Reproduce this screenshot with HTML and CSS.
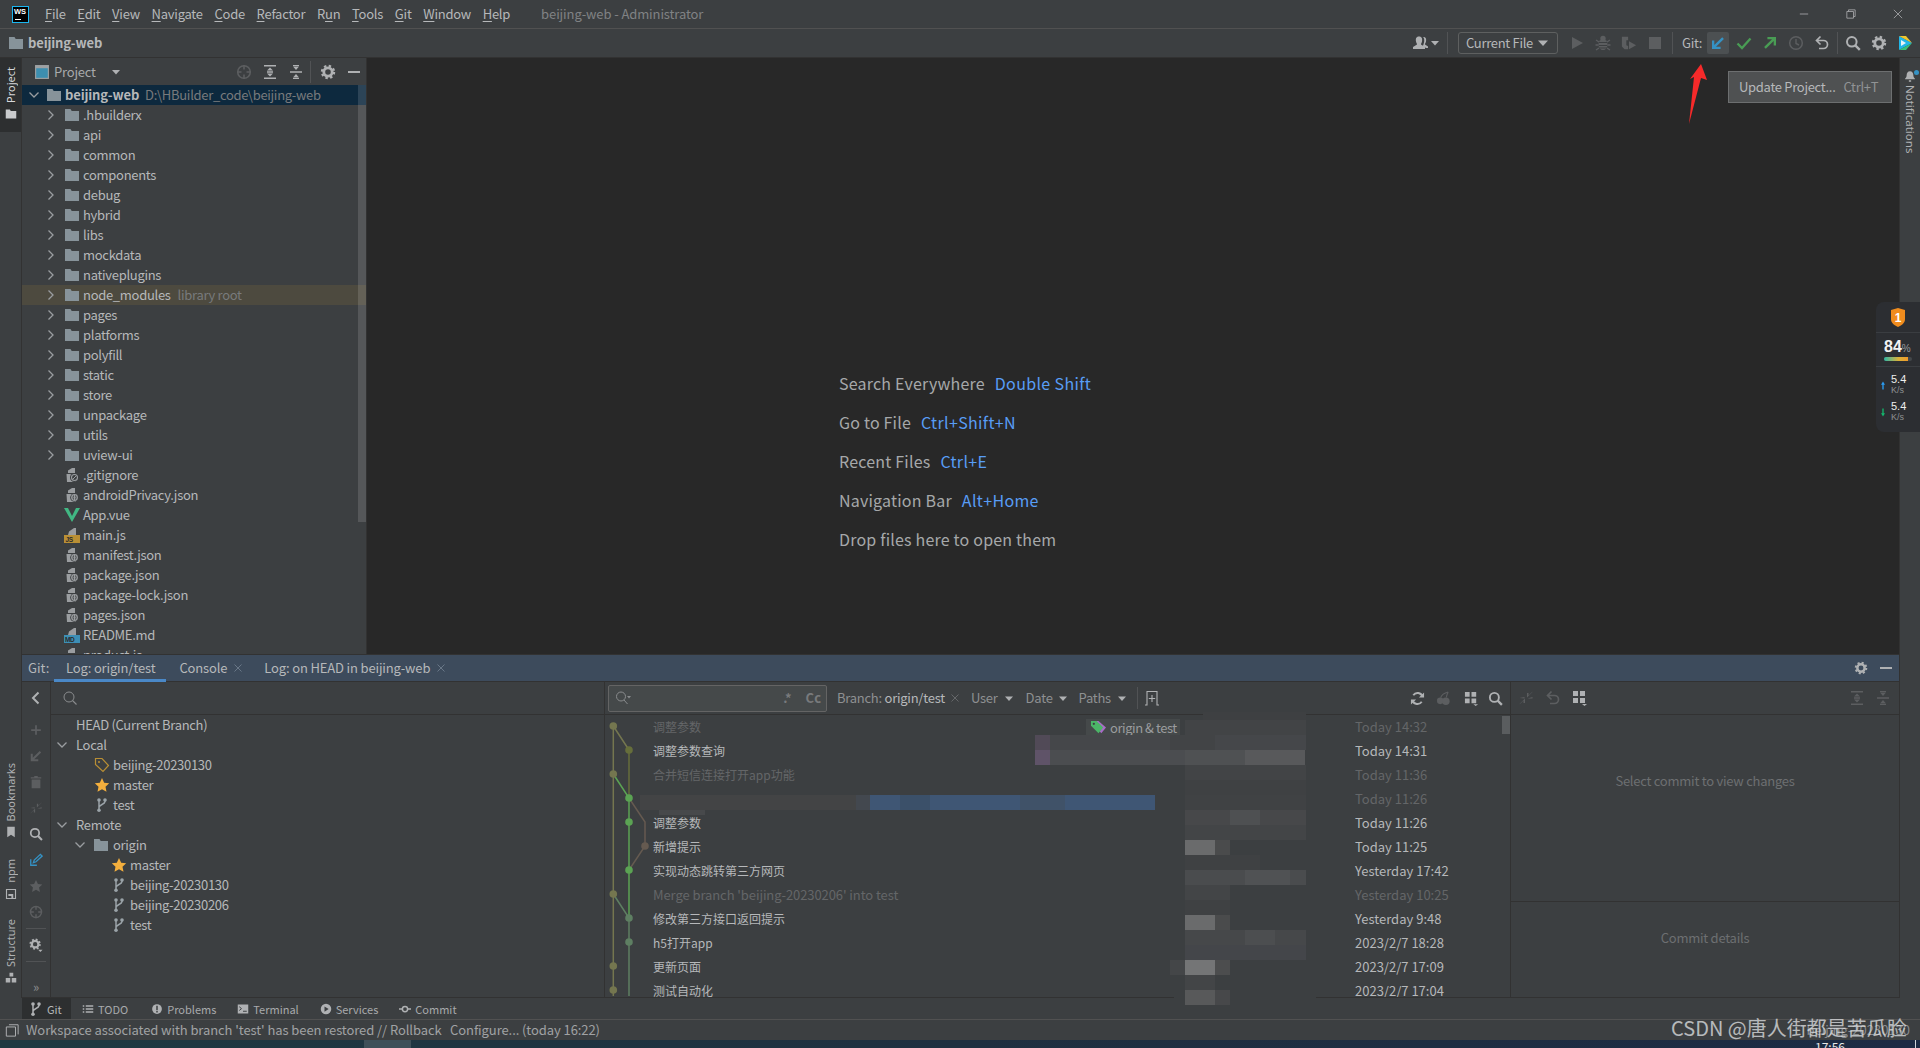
FILE: index.html
```html
<!DOCTYPE html>
<html lang="en">
<head>
<meta charset="utf-8">
<title>beijing-web - Administrator</title>
<link rel="stylesheet" href="styles.css">
</head>
<body>
<svg class="defs" aria-hidden="true">
  <symbol id="folder" viewBox="0 0 16 16"><path fill="currentColor" d="M1 2h5.500l1.200 2H15v10H1z"/></symbol>
  <symbol id="chev-r" viewBox="0 0 16 16"><path fill="none" stroke="currentColor" stroke-width="1.300" d="M5.500 3.500 10 8l-4.500 4.500"/></symbol>
  <symbol id="chev-d" viewBox="0 0 16 16"><path fill="none" stroke="currentColor" stroke-width="1.300" d="M3.500 5.500 8 10l4.500-4.500"/></symbol>
  <symbol id="chev-l" viewBox="0 0 16 16"><path fill="none" stroke="currentColor" stroke-width="2" d="M10.500 2.500 5 8l5.500 5.500"/></symbol>
  <symbol id="tri" viewBox="0 0 10 6"><path fill="currentColor" d="M0 .5h10L5 6z"/></symbol>
  <symbol id="xmark" viewBox="0 0 8 8"><path stroke="currentColor" stroke-width=".9" d="m.5.500 7 7M7.500.500l-7 7"/></symbol>
  <symbol id="doc" viewBox="0 0 16 16"><path fill="#9a9da0" d="M4 3.500 8 1h3v5H4zM2.500 7H12v8H3z"/><circle cx="10.500" cy="10.500" r="4.300" fill="#3c3f41"/><circle cx="10.500" cy="10.500" r="3.400" fill="#9a9da0"/><path fill="none" stroke="#3c3f41" d="M9.800 8.500c-1 0 0 2-1 2 1 0 0 2 1 2M11.300 8.500c1 0 0 2 1 2-1 0 0 2-1 2"/></symbol>
  <symbol id="ignore" viewBox="0 0 16 16"><path fill="#9a9da0" d="M4 3.500 8 1h3v5H4zM2.500 7H12v8H3z"/><circle cx="10.500" cy="10.500" r="4.500" fill="#3c3f41"/><circle cx="10.500" cy="10.500" r="3" fill="none" stroke="#9a9da0" stroke-width="1.100"/><path stroke="#9a9da0" d="m8.500 12.500 4-4"/></symbol>
  <symbol id="vue" viewBox="0 0 16 16"><path fill="#41b883" d="M0 1h4l4 8 4-8h4L8 15z"/></symbol>
  <symbol id="jsf" viewBox="0 0 16 16"><path fill="#9a9da0" d="M5 4.500 10 1h2v7H4z"/><rect y="8" width="16" height="8" fill="#b98f35"/><text x="1.500" y="14.500" class="tag-js">JS</text></symbol>
  <symbol id="mdf" viewBox="0 0 16 16"><path fill="#9a9da0" d="M5 4.500 10 1h2v7H4z"/><rect y="8" width="16" height="8" fill="#3d8fb5"/><text x="1" y="14.500" class="tag-js">MD</text></symbol>
  <symbol id="gear" viewBox="0 0 16 16"><circle cx="8" cy="8" r="4.200" fill="none" stroke="currentColor" stroke-width="2.800"/><circle cx="8" cy="8" r="6" fill="none" stroke="currentColor" stroke-width="2.400" stroke-dasharray="2.350 2.360"/></symbol>
  <symbol id="minus" viewBox="0 0 16 16"><rect x="2" y="7" width="12" height="2" fill="currentColor"/></symbol>
  <symbol id="locate" viewBox="0 0 16 16"><circle cx="8" cy="8" r="6.300" fill="none" stroke="currentColor" stroke-width="1.600"/><path stroke="currentColor" stroke-width="1.600" d="M8 1v4.500M8 10.500V15M1 8h4.500M10.500 8H15"/></symbol>
  <symbol id="expand" viewBox="0 0 16 16"><path fill="currentColor" d="M2 1h12v1.500H2zM2 13.500h12V15H2zM8 3.500l3 3H5zM8 12.500l-3-3h6zM5 7.300h6v1.400H5z"/></symbol>
  <symbol id="collapse" viewBox="0 0 16 16"><path fill="currentColor" d="M2 7.200h12v1.600H2zM8 6 5 2.500h6zM8 10l3 3.500H5zM5 1h6v1H5zM5 14h6v1H5z"/></symbol>
  <symbol id="user" viewBox="0 0 26 16"><path fill="currentColor" d="M6 1.500c3 0 3.500 2.500 3 5-.3 1.500-1 2-1 3l4 2.500v2H0v-2l4-2.500c0-1-.7-1.500-1-3-.5-2.500 0-5 3-5zM10 2c3 0 3.500 2 3 4.500-.3 1.300-1 2-1 3l3 2v1.500h-2l-3-2c.5-2 1-3 1.200-4.500.2-2 0-3.500-1.200-4.500z"/><path fill="currentColor" d="M18 6h8l-4 4.500z"/></symbol>
  <symbol id="play" viewBox="0 0 16 16"><path fill="currentColor" d="M3 2v12l11-6z"/></symbol>
  <symbol id="bug" viewBox="0 0 16 16"><ellipse cx="8" cy="9.500" rx="4.500" ry="5.500" fill="currentColor"/><circle cx="8" cy="3.500" r="2.700" fill="currentColor"/><path stroke="currentColor" stroke-width="1.300" d="M1 5l3 2M15 5l-3 2M.5 10h3M15.500 10h-3M1 15l3-2M15 15l-3-2"/><path stroke="#3c3f41" d="M4 7.500h8M4 10.500h8M4 13h8"/></symbol>
  <symbol id="cov" viewBox="0 0 18 16"><path fill="currentColor" d="M1 1h7v4H6v5.500l2 1V15H4l-3-3z"/><path fill="currentColor" d="M9 6v9l8-4.500z"/></symbol>
  <symbol id="stop" viewBox="0 0 16 16"><rect x="2" y="2" width="12" height="12" fill="currentColor"/></symbol>
  <symbol id="upd" viewBox="0 0 16 16"><path fill="currentColor" d="M2 14V5.500h2.300v4.600L12.200 2.200l1.700 1.700L6 11.800h4.600V14z"/></symbol>
  <symbol id="chk" viewBox="0 0 16 16"><path fill="none" stroke="currentColor" stroke-width="2.300" d="m1.500 8.500 4.500 4.500 8.500-9.500"/></symbol>
  <symbol id="push" viewBox="0 0 16 16"><path fill="currentColor" d="M14 2v8.500h-2.300V5.900L3.800 13.800 2.100 12.100 10 4.200H5.400V2z"/></symbol>
  <symbol id="clock" viewBox="0 0 16 16"><circle cx="8" cy="8" r="6.300" fill="none" stroke="currentColor" stroke-width="1.500"/><path fill="none" stroke="currentColor" stroke-width="1.400" d="M8 4v4.500l3 1.500"/></symbol>
  <symbol id="undo" viewBox="0 0 16 16"><path fill="none" stroke="currentColor" stroke-width="1.700" d="M3 5.500h6.500a4 4 0 0 1 0 8H5M6.500 1.500 2.500 5.500l4 4"/></symbol>
  <symbol id="search" viewBox="0 0 16 16"><circle cx="6.800" cy="6.800" r="4.800" fill="none" stroke="currentColor" stroke-width="2"/><path stroke="currentColor" stroke-width="2.400" d="m10.300 10.300 4.500 4.500"/></symbol>
  <symbol id="search-thin" viewBox="0 0 16 16"><circle cx="7" cy="7" r="5" fill="none" stroke="currentColor"/><path stroke="currentColor" stroke-width="1.100" d="m10.500 10.500 4 4"/></symbol>
  <symbol id="searchq" viewBox="0 0 16 16"><circle cx="6" cy="6.500" r="4.500" fill="none" stroke="currentColor"/><path stroke="currentColor" d="m9 10 3.500 4"/><path fill="currentColor" d="M12 6h4l-2 2.500z"/></symbol>
  <symbol id="logo" viewBox="0 0 16 16"><path fill="#21b6e8" d="M2 1 15 8 2 15z"/><path fill="#f0c62c" d="M2 1 9 1 15 8z"/><path fill="#35c07a" d="M2 15 9 15 15 8z"/><path fill="#e8f4f8" d="M4 5l5 3-5 3z"/></symbol>
  <symbol id="plus" viewBox="0 0 16 16"><path fill="currentColor" d="M7 2.500h2V7h4.500v2H9v4.500H7V9H2.500V7H7z"/></symbol>
  <symbol id="trash" viewBox="0 0 16 16"><path fill="currentColor" d="M3 5h10v10H3zM2 2.500h4V1h4v1.500h4V4H2z"/></symbol>
  <symbol id="fetch" viewBox="0 0 16 16"><path fill="currentColor" d="M15 1.500 9 7.500V3h1.500v2.500l3-3zM1 14.500l6-6V13H5.500v-2.500l-3 3zM9.500 8.500l5-1.500V8.500zM1.500 8l5-1v1.500z"/></symbol>
  <symbol id="pencil" viewBox="0 0 16 16"><path fill="none" stroke="currentColor" stroke-width="1.500" d="M2 7v7h7M5 11l1-3 7-6.500 2 2L8 10z"/></symbol>
  <symbol id="star" viewBox="0 0 16 16"><path fill="currentColor" d="m8 1 2.200 4.700 5 .6-3.700 3.500 1 5L8 12.300l-4.500 2.500 1-5L.8 6.300l5-.6z"/></symbol>
  <symbol id="gear-d" viewBox="0 0 16 16"><circle cx="7" cy="7" r="3.800" fill="none" stroke="currentColor" stroke-width="2.600"/><circle cx="7" cy="7" r="5.400" fill="none" stroke="currentColor" stroke-width="2.200" stroke-dasharray="2.100 2.140"/><path fill="currentColor" d="M10.500 13.500h5l-2.500 2.500z"/></symbol>
  <symbol id="tagi" viewBox="0 0 16 16"><path fill="none" stroke="#b98f35" stroke-width="1.200" d="M1.500 1.500h6.500l6.500 7-5.500 6-7.500-7z"/><circle cx="5" cy="5" r="1" fill="#b98f35"/></symbol>
  <symbol id="branch" viewBox="0 0 16 16"><path fill="none" stroke="currentColor" stroke-width="1.500" d="M5 3v10M11 3v1.500c0 3-6 3-6 6"/><circle cx="5" cy="3" r="1.800" fill="currentColor"/><circle cx="5" cy="13.200" r="1.800" fill="currentColor"/><circle cx="11" cy="3" r="1.800" fill="currentColor"/></symbol>
  <symbol id="refresh" viewBox="0 0 16 16"><path fill="none" stroke="currentColor" stroke-width="2" d="M13.300 6A5.500 5.500 0 0 0 3.500 4.500M2.700 10a5.500 5.500 0 0 0 9.800 1.500"/><path fill="currentColor" d="M15 1.500V7H9.500zM1 14.500V9h5.500z"/></symbol>
  <symbol id="cherry" viewBox="0 0 16 16"><circle cx="4.500" cy="10.500" r="3.500" fill="currentColor"/><circle cx="10.500" cy="11" r="4" fill="currentColor"/><path fill="none" stroke="currentColor" stroke-width="1.200" d="M13 1C9 2 6 4 5 7M13 1c-1 2-2 4-2 6"/></symbol>
  <symbol id="group" viewBox="0 0 16 16"><path fill="currentColor" d="M1 1h5v5H1zM8 1h5v5H8zM1 8h5v5H1zM8 8h5v5H8zM10 14h5l-2.500 2z"/></symbol>
  <symbol id="newtab" viewBox="0 0 16 16"><path fill="none" stroke="currentColor" stroke-width="1.100" d="M1 15h2V1.500h10V15h2M8 5v7M4.800 8.500h6.400"/></symbol>
  <symbol id="list" viewBox="0 0 16 16"><path fill="currentColor" d="M1 3h2v2H1zM5 3h10v2H5zM1 7h2v2H1zM5 7h10v2H5zM1 11h2v2H1zM5 11h10v2H5z"/></symbol>
  <symbol id="prob" viewBox="0 0 16 16"><circle cx="8" cy="8" r="6.500" fill="currentColor"/><path stroke="#3c3f41" stroke-width="2" d="M8 3.500v6M8 10.500v2"/></symbol>
  <symbol id="term" viewBox="0 0 16 16"><path fill="currentColor" d="M1 2h14v12H1z"/><path fill="none" stroke="#3c3f41" stroke-width="1.300" d="m3 5 3 2.500L3 10M8 11h5"/></symbol>
  <symbol id="serv" viewBox="0 0 16 16"><circle cx="8" cy="8" r="7" fill="currentColor"/><path fill="#3c3f41" d="M6 4.500v7l5.500-3.500z"/></symbol>
  <symbol id="commit" viewBox="0 0 16 16"><circle cx="8" cy="8" r="3.500" fill="none" stroke="currentColor" stroke-width="2"/><path stroke="currentColor" stroke-width="2" d="M0 8h4M12 8h4"/></symbol>
  <symbol id="square" viewBox="0 0 16 16"><path fill="none" stroke="currentColor" stroke-width="1.100" d="M4.500 2H15v11M1.500 4.500h10.500v10.500H1.500z"/></symbol>
  <symbol id="bell" viewBox="0 0 16 16"><path fill="currentColor" d="M8 1c3 0 4.500 2.500 4.500 5.500 0 2 1 3 2 4v1H1.500v-1c1-1 2-2 2-4C3.500 3.500 5 1 8 1zM6.500 13h3v2h-3z"/></symbol>
  <symbol id="bookmark" viewBox="0 0 16 16"><path fill="currentColor" d="M3 1h10v14l-5-3.500L3 15z"/></symbol>
  <symbol id="npmi" viewBox="0 0 16 16"><path fill="none" stroke="currentColor" stroke-width="1.500" d="M2 2h12v12H2z"/><path fill="currentColor" d="M4.500 8H11v6H8.500V10.500h-4z"/></symbol>
  <symbol id="struct" viewBox="0 0 16 16"><path fill="currentColor" d="M6 1h5v5H6zM1 8h6v6H1zM9 8h6v6H9z"/></symbol>
  <symbol id="projtool" viewBox="0 0 16 16"><rect x=".7" y=".7" width="14.600" height="14.600" fill="#3d8fb0" stroke="#9ea1a3" stroke-width="1.300"/><rect x=".7" y=".7" width="14.600" height="3" fill="#9ea1a3"/></symbol>
  <symbol id="greentag" viewBox="0 0 18 16"><path fill="#a96cc7" d="M6 1h3l8 7-5 6-6-7z"/><path fill="#4bb567" d="M1 1h6l7 7-5 6-8-8z"/><circle cx="4" cy="4" r="1.200" fill="#3c3f41"/></symbol>
</svg>

<header class="titlebar">
  <div class="ws-logo"><span class="ws-text">WS</span><span class="ws-line"></span></div>
  <nav class="menu">
    <span><u>F</u>ile</span><span><u>E</u>dit</span><span><u>V</u>iew</span><span><u>N</u>avigate</span><span><u>C</u>ode</span><span><u>R</u>efactor</span><span>R<u>u</u>n</span><span><u>T</u>ools</span><span><u>G</u>it</span><span><u>W</u>indow</span><span><u>H</u>elp</span>
  </nav>
  <div class="wintitle">beijing-web - Administrator</div>
  <div class="winctl">
    <svg class="wc" viewBox="0 0 12 12"><path stroke="#a8aaac" d="M1 6h10"/></svg>
    <svg class="wc" viewBox="0 0 12 12"><path fill="none" stroke="#a8aaac" d="M3 3V1h8v8H9M1 3h8v8H1z"/></svg>
    <svg class="wc" viewBox="0 0 12 12"><path stroke="#a8aaac" d="m1 1 10 10M11 1 1 11"/></svg>
  </div>
</header>

<div class="navbar">
  <svg class="i nav-folder"><use href="#folder"/></svg>
  <span class="crumb">beijing-web</span>
  <div class="spacer"></div>
  <svg class="i-user"><use href="#user"/></svg>
  <span class="vsep sep-a"></span>
  <div class="runcfg"><span>Current File</span><svg class="tri"><use href="#tri"/></svg></div>
  <div class="tb first"><svg class="i dim"><use href="#play"/></svg></div>
  <div class="tb"><svg class="i dim"><use href="#bug"/></svg></div>
  <div class="tb"><svg class="i dim"><use href="#cov"/></svg></div>
  <div class="tb"><svg class="i dim"><use href="#stop"/></svg></div>
  <span class="vsep sep-b"></span>
  <span class="gitlbl">Git:</span>
  <div class="tb"><span class="hover"><svg class="i blue"><use href="#upd"/></svg></span></div>
  <div class="tb"><svg class="i green"><use href="#chk"/></svg></div>
  <div class="tb"><svg class="i green"><use href="#push"/></svg></div>
  <div class="tb"><svg class="i dim"><use href="#clock"/></svg></div>
  <div class="tb"><svg class="i"><use href="#undo"/></svg></div>
  <span class="vsep sep-c"></span>
  <div class="tb"><svg class="i"><use href="#search"/></svg></div>
  <div class="tb"><svg class="i"><use href="#gear"/></svg></div>
  <div class="tb tb-last"><svg class="i"><use href="#logo"/></svg></div>
</div>

<main class="workspace">
  <aside class="left-strip">
    <div class="strip-project"><span class="vtext active">Project</span><svg class="i strip-ic light"><use href="#folder"/></svg></div>
    <div class="spacer"></div>
    <span class="vtext">Bookmarks</span><svg class="i strip-ic s-bm"><use href="#bookmark"/></svg>
    <span class="vtext s-npm">npm</span><svg class="i strip-ic s-npmi"><use href="#npmi"/></svg>
    <span class="vtext s-st">Structure</span><svg class="i strip-ic s-sti"><use href="#struct"/></svg>
  </aside>

  <div class="center">
    <div class="top">
      <section class="project">
        <div class="pj-head">
          <svg class="i pj-ic"><use href="#projtool"/></svg>
          <span class="pj-title">Project</span>
          <svg class="tri pj-tri"><use href="#tri"/></svg>
          <div class="spacer"></div>
          <svg class="i dim"><use href="#locate"/></svg>
          <svg class="i pj-a"><use href="#expand"/></svg>
          <svg class="i pj-a"><use href="#collapse"/></svg>
          <span class="vsep pj-sep"></span>
          <svg class="i pj-g"><use href="#gear"/></svg>
          <svg class="i pj-m"><use href="#minus"/></svg>
        </div>
        <div class="tree">
          <div class="row root"><svg class="i tw"><use href="#chev-d"/></svg><svg class="i fic r"><use href="#folder"/></svg><b>beijing-web</b><span class="path">D:\HBuilder_code\beijing-web</span></div>
          <div class="row dir"><svg class="i tw"><use href="#chev-r"/></svg><svg class="i fic"><use href="#folder"/></svg>.hbuilderx</div>
          <div class="row dir"><svg class="i tw"><use href="#chev-r"/></svg><svg class="i fic"><use href="#folder"/></svg>api</div>
          <div class="row dir"><svg class="i tw"><use href="#chev-r"/></svg><svg class="i fic"><use href="#folder"/></svg>common</div>
          <div class="row dir"><svg class="i tw"><use href="#chev-r"/></svg><svg class="i fic"><use href="#folder"/></svg>components</div>
          <div class="row dir"><svg class="i tw"><use href="#chev-r"/></svg><svg class="i fic"><use href="#folder"/></svg>debug</div>
          <div class="row dir"><svg class="i tw"><use href="#chev-r"/></svg><svg class="i fic"><use href="#folder"/></svg>hybrid</div>
          <div class="row dir"><svg class="i tw"><use href="#chev-r"/></svg><svg class="i fic"><use href="#folder"/></svg>libs</div>
          <div class="row dir"><svg class="i tw"><use href="#chev-r"/></svg><svg class="i fic"><use href="#folder"/></svg>mockdata</div>
          <div class="row dir"><svg class="i tw"><use href="#chev-r"/></svg><svg class="i fic"><use href="#folder"/></svg>nativeplugins</div>
          <div class="row dir lib"><svg class="i tw"><use href="#chev-r"/></svg><svg class="i fic"><use href="#folder"/></svg>node_modules<span class="libroot">library root</span></div>
          <div class="row dir"><svg class="i tw"><use href="#chev-r"/></svg><svg class="i fic"><use href="#folder"/></svg>pages</div>
          <div class="row dir"><svg class="i tw"><use href="#chev-r"/></svg><svg class="i fic"><use href="#folder"/></svg>platforms</div>
          <div class="row dir"><svg class="i tw"><use href="#chev-r"/></svg><svg class="i fic"><use href="#folder"/></svg>polyfill</div>
          <div class="row dir"><svg class="i tw"><use href="#chev-r"/></svg><svg class="i fic"><use href="#folder"/></svg>static</div>
          <div class="row dir"><svg class="i tw"><use href="#chev-r"/></svg><svg class="i fic"><use href="#folder"/></svg>store</div>
          <div class="row dir"><svg class="i tw"><use href="#chev-r"/></svg><svg class="i fic"><use href="#folder"/></svg>unpackage</div>
          <div class="row dir"><svg class="i tw"><use href="#chev-r"/></svg><svg class="i fic"><use href="#folder"/></svg>utils</div>
          <div class="row dir"><svg class="i tw"><use href="#chev-r"/></svg><svg class="i fic"><use href="#folder"/></svg>uview-ui</div>
          <div class="row file"><svg class="i fic"><use href="#ignore"/></svg>.gitignore</div>
          <div class="row file"><svg class="i fic"><use href="#doc"/></svg>androidPrivacy.json</div>
          <div class="row file"><svg class="i fic"><use href="#vue"/></svg>App.vue</div>
          <div class="row file"><svg class="i fic"><use href="#jsf"/></svg>main.js</div>
          <div class="row file"><svg class="i fic"><use href="#doc"/></svg>manifest.json</div>
          <div class="row file"><svg class="i fic"><use href="#doc"/></svg>package.json</div>
          <div class="row file"><svg class="i fic"><use href="#doc"/></svg>package-lock.json</div>
          <div class="row file"><svg class="i fic"><use href="#doc"/></svg>pages.json</div>
          <div class="row file"><svg class="i fic"><use href="#mdf"/></svg>README.md</div>
          <div class="row file"><svg class="i fic"><use href="#doc"/></svg>product.js</div>
          <div class="pj-scroll"></div>
        </div>
      </section>
      <section class="editor">
        <p class="hint">Search Everywhere<span>Double Shift</span></p>
        <p class="hint">Go to File<span>Ctrl+Shift+N</span></p>
        <p class="hint">Recent Files<span>Ctrl+E</span></p>
        <p class="hint">Navigation Bar<span>Alt+Home</span></p>
        <p class="hint">Drop files here to open them</p>
      </section>
    </div>

    <section class="bottom">
      <div class="tabs">
        <span class="tab-lbl">Git:</span>
        <span class="tab on">Log: origin/test</span>
        <span class="tab t-con">Console</span><svg class="tab-x"><use href="#xmark"/></svg>
        <span class="tab t-head">Log: on HEAD in beijing-web</span><svg class="tab-x"><use href="#xmark"/></svg>
        <div class="spacer"></div>
        <svg class="i tab-g"><use href="#gear"/></svg>
        <svg class="i tab-m"><use href="#minus"/></svg>
      </div>
      <div class="git-body">
        <div class="vtools">
          <div class="vt-top"><svg class="i"><use href="#chev-l"/></svg></div>
          <div class="vt"><svg class="i dim"><use href="#plus"/></svg></div>
          <div class="vt"><svg class="i dim"><use href="#upd"/></svg></div>
          <div class="vt"><svg class="i dim"><use href="#trash"/></svg></div>
          <div class="vt"><svg class="i dim"><use href="#fetch"/></svg></div>
          <div class="vt"><svg class="i"><use href="#search"/></svg></div>
          <div class="vt"><svg class="i blue"><use href="#pencil"/></svg></div>
          <div class="vt"><svg class="i dim"><use href="#star"/></svg></div>
          <div class="vt"><svg class="i dim"><use href="#locate"/></svg></div>
          <span class="hsep"></span>
          <div class="vt"><svg class="i"><use href="#gear-d"/></svg></div>
          <span class="hsep"></span>
          <div class="spacer"></div>
          <span class="more">»</span>
        </div>
        <div class="branches">
          <div class="sub-head"><svg class="i br-s"><use href="#search-thin"/></svg></div>
          <div class="br-row lv1">HEAD (Current Branch)</div>
          <div class="br-row lv0"><svg class="i tw"><use href="#chev-d"/></svg>Local</div>
          <div class="br-row lv2"><svg class="i bi"><use href="#tagi"/></svg>beijing-20230130</div>
          <div class="br-row lv2"><svg class="i bi orange"><use href="#star"/></svg>master</div>
          <div class="br-row lv2"><svg class="i bi brc"><use href="#branch"/></svg>test</div>
          <div class="br-row lv0"><svg class="i tw"><use href="#chev-d"/></svg>Remote</div>
          <div class="br-row lv3"><svg class="i tw"><use href="#chev-d"/></svg><svg class="i bi fold"><use href="#folder"/></svg>origin</div>
          <div class="br-row lv4"><svg class="i bi orange"><use href="#star"/></svg>master</div>
          <div class="br-row lv4"><svg class="i bi brc"><use href="#branch"/></svg>beijing-20230130</div>
          <div class="br-row lv4"><svg class="i bi brc"><use href="#branch"/></svg>beijing-20230206</div>
          <div class="br-row lv4"><svg class="i bi brc"><use href="#branch"/></svg>test</div>
        </div>
        <div class="log">
          <div class="sub-head log-head">
            <div class="logsearch"><svg class="i lq"><use href="#searchq"/></svg><div class="spacer"></div><span class="re">.*</span><span class="cc">Cc</span></div>
            <span class="flt f-br">Branch: <em>origin/test</em></span><svg class="fx"><use href="#xmark"/></svg>
            <span class="flt f-u">User</span><svg class="tri sm-tri"><use href="#tri"/></svg>
            <span class="flt f-d">Date</span><svg class="tri sm-tri"><use href="#tri"/></svg>
            <span class="flt f-p">Paths</span><svg class="tri sm-tri"><use href="#tri"/></svg>
            <span class="vsep f-sep"></span>
            <svg class="i"><use href="#newtab"/></svg>
            <div class="spacer"></div>
            <svg class="i lt lt1"><use href="#refresh"/></svg>
            <svg class="i lt lt2 dim"><use href="#cherry"/></svg>
            <svg class="i lt lt3"><use href="#group"/></svg>
            <svg class="i lt lt4"><use href="#search"/></svg>
          </div>
          <div class="log-list">
            <div class="c off"><span class="s">调整参数<span class="reftag"><svg class="rt"><use href="#greentag"/></svg>origin &amp; test</span></span><span class="d">Today 14:32</span></div>
            <div class="c"><span class="s">调整参数查询</span><span class="d">Today 14:31</span></div>
            <div class="c off"><span class="s">合并短信连接打开app功能</span><span class="d">Today 11:36</span></div>
            <div class="c off"><span class="s"></span><span class="d">Today 11:26</span></div>
            <div class="c"><span class="s">调整参数</span><span class="d">Today 11:26</span></div>
            <div class="c"><span class="s">新增提示</span><span class="d">Today 11:25</span></div>
            <div class="c"><span class="s">实现动态跳转第三方网页</span><span class="d">Yesterday 17:42</span></div>
            <div class="c off"><span class="s latin">Merge branch 'beijing-20230206' into test</span><span class="d">Yesterday 10:25</span></div>
            <div class="c"><span class="s">修改第三方接口返回提示</span><span class="d">Yesterday 9:48</span></div>
            <div class="c"><span class="s">h5打开app</span><span class="d">2023/2/7 18:28</span></div>
            <div class="c"><span class="s">更新页面</span><span class="d">2023/2/7 17:09</span></div>
            <div class="c"><span class="s">测试自动化</span><span class="d">2023/2/7 17:04</span></div>
            <svg class="graph" viewBox="0 0 50 281">
              <g fill="none" stroke-width="1.500">
                <path stroke="#74764f" d="M8.300 11V281M8.300 11 24 35"/>
                <path stroke="#666e3b" d="M24 35V83"/>
                <path stroke="#5ba353" d="M8.300 59 24 83V203"/>
                <path stroke="#655a50" d="M24 83 40 107V131L24 155"/>
                <path stroke="#5e7f62" d="M8.300 179 24 203V281"/>
              </g>
              <g fill="#74764f"><circle cx="8.300" cy="11" r="3.800"/><circle cx="8.300" cy="59" r="3.800"/><circle cx="8.300" cy="179" r="3.800"/><circle cx="8.300" cy="251" r="3.800"/><circle cx="8.300" cy="275" r="3.800"/></g>
              <circle cx="24" cy="35" r="3.800" fill="#666e3b"/>
              <g fill="#5ba353"><circle cx="24" cy="83" r="3.800"/><circle cx="24" cy="107" r="3.800"/><circle cx="24" cy="155" r="3.800"/></g>
              <circle cx="40" cy="131" r="3.800" fill="#655a50"/>
              <g fill="#5e7f62"><circle cx="24" cy="203" r="3.800"/><circle cx="24" cy="227" r="3.800"/></g>
            </svg>
            <div class="log-scroll"></div>
          </div>
        </div>
        <div class="details">
          <div class="sub-head det-head">
            <svg class="i dim"><use href="#fetch"/></svg>
            <svg class="i dim d-u"><use href="#undo"/></svg>
            <svg class="i d-g"><use href="#group"/></svg>
            <div class="spacer"></div>
            <svg class="i dim"><use href="#expand"/></svg>
            <svg class="i dim d-c"><use href="#collapse"/></svg>
          </div>
          <div class="det-a">Select commit to view changes</div>
          <div class="det-b">Commit details</div>
        </div>
      </div>
    </section>
  </div>

  <aside class="right-strip">
    <svg class="i bell"><use href="#bell"/></svg>
    <span class="vtext-r">Notifications</span>
  </aside>
</main>

<div class="toolbar-bottom">
  <div class="tw-btn on"><svg class="i"><use href="#branch"/></svg>Git</div>
  <div class="tw-btn t-todo"><svg class="i sm"><use href="#list"/></svg>TODO</div>
  <div class="tw-btn"><svg class="i sm"><use href="#prob"/></svg>Problems</div>
  <div class="tw-btn"><svg class="i sm"><use href="#term"/></svg>Terminal</div>
  <div class="tw-btn"><svg class="i sm"><use href="#serv"/></svg>Services</div>
  <div class="tw-btn"><svg class="i sm"><use href="#commit"/></svg>Commit</div>
</div>
<footer class="statusbar">
  <svg class="i st-ic"><use href="#square"/></svg>
  <span class="st-msg">Workspace associated with branch 'test' has been restored // Rollback&nbsp;&nbsp; Configure... (today 16:22)</span>
  <div class="spacer"></div>
  <span class="st-br">beijing-20230130</span>
</footer>
<div class="taskbar"><span class="tk-app"></span><div class="spacer"></div><span class="tk-time">17:56</span><span class="tk-edge"></span></div>

<div class="tooltip">Update Project...<span>Ctrl+T</span></div>

<div class="widget">
  <div class="w-top"><svg class="shield" viewBox="0 0 14 19"><path fill="#f08c1e" d="M7 0l7 2v9c0 4-3 6-7 8-4-2-7-4-7-8V2z"/><text x="7" y="13.500" class="shield-n">1</text></svg></div>
  <div class="w-mid"><div class="w-pct">84<small>%</small></div><div class="w-bar"><i></i></div></div>
  <div class="w-net">
    <div class="w-sp"><svg class="ar" viewBox="0 0 6 12"><path fill="#2b9cf2" d="M3 0l3 5H4v7H2V5H0z"/></svg><div class="w-val">5.4<small>K/s</small></div></div>
    <div class="w-sp"><svg class="ar" viewBox="0 0 6 12"><path fill="#14b66c" d="M3 12 0 7h2V0h2v7h2z"/></svg><div class="w-val">5.4<small>K/s</small></div></div>
  </div>
</div>

<svg class="overlay" viewBox="0 0 1920 1048" aria-hidden="true">
  <path fill="#f72a2a" d="M1701 64l6 16-6-2-12 46 5-47-4 2z"/>
  <g class="mosaic">
    <rect x="1203" y="712" width="103" height="8" fill="#3e4042"/>
    <rect x="1185" y="720" width="121" height="15" fill="#424446"/>
    <rect x="1035" y="735" width="15" height="15" fill="#514a57"/><rect x="1050" y="735" width="256" height="15" fill="#45474a"/><rect x="1170" y="735" width="45" height="15" fill="#424446"/>
    <rect x="1035" y="750" width="15" height="15" fill="#5f5368"/><rect x="1050" y="750" width="135" height="15" fill="#4b4d50"/><rect x="1185" y="750" width="60" height="15" fill="#4f5153"/><rect x="1245" y="750" width="60" height="15" fill="#58595b"/>
    <rect x="1185" y="765" width="121" height="15" fill="#424446"/>
    <rect x="1185" y="780" width="121" height="15" fill="#3f4143"/>
    <rect x="640" y="795" width="216" height="15" fill="#434445"/><rect x="856" y="795" width="14" height="15" fill="#43484f"/><rect x="870" y="795" width="285" height="15" fill="#3f5674"/><rect x="900" y="795" width="30" height="15" fill="#3b5069"/><rect x="1020" y="795" width="45" height="15" fill="#405268"/><rect x="1185" y="795" width="121" height="15" fill="#404244"/>
    <rect x="659" y="810" width="46" height="5" fill="#47494b"/><rect x="1185" y="810" width="121" height="15" fill="#47484a"/><rect x="1230" y="810" width="30" height="15" fill="#4e5052"/>
    <rect x="1185" y="825" width="121" height="15" fill="#434547"/>
    <rect x="1185" y="840" width="30" height="15" fill="#6a6b6c"/><rect x="1215" y="840" width="15" height="15" fill="#4a4b4c"/>
    <rect x="1185" y="855" width="75" height="15" fill="#3f4143"/>
    <rect x="1185" y="870" width="121" height="15" fill="#4a4c4e"/><rect x="1245" y="870" width="45" height="15" fill="#505254"/>
    <rect x="1185" y="885" width="45" height="15" fill="#434547"/>
    <rect x="1185" y="900" width="45" height="15" fill="#3f4143"/>
    <rect x="1185" y="915" width="30" height="15" fill="#6a6b6c"/><rect x="1215" y="915" width="15" height="15" fill="#4a4b4c"/>
    <rect x="1185" y="930" width="121" height="15" fill="#46484a"/><rect x="1245" y="930" width="30" height="15" fill="#4c4e50"/>
    <rect x="1185" y="945" width="121" height="15" fill="#44464a"/>
    <rect x="1170" y="960" width="15" height="15" fill="#444648"/><rect x="1185" y="960" width="30" height="15" fill="#747576"/><rect x="1215" y="960" width="15" height="15" fill="#4c4d4e"/>
    <rect x="1185" y="975" width="30" height="15" fill="#434547"/>
    <rect x="1174" y="990" width="142" height="15" fill="#3c3f41"/>
    <rect x="1185" y="990" width="30" height="15" fill="#58595a"/><rect x="1215" y="990" width="15" height="15" fill="#47484a"/>
  </g>
</svg>
<div class="watermark">CSDN @唐人街都是苦瓜脸</div>
</body>
</html>
```
FILE: styles.css
```css
* { box-sizing: border-box; }
html, body { margin: 0; height: 100%; }
body {
  width: 1920px; height: 1048px; overflow: hidden; position: relative;
  display: flex; flex-direction: column;
  background: #3c3f41; color: #b6b8ba;
  font: 13px/20px "Noto Sans CJK SC", "Noto Sans", sans-serif;
}
.defs { display: none; }
.tag-js { font: bold 6.500px "Liberation Sans", sans-serif; fill: #2b2b2b; }
.spacer { flex: 1; }
.i { width: 16px; height: 16px; flex: none; color: #afb1b3; display: block; }
.i.dim { color: #5c5e60; }
.i.blue { color: #3592c4; }
.i.green { color: #499c54; }
.tri { width: 10px; height: 6px; flex: none; color: #afb1b3; }
.vsep { width: 1px; height: 22px; background: #515355; flex: none; }

/* title */
.titlebar { height: 29px; flex: none; display: flex; align-items: center; border-bottom: 1px solid #515151; }
.ws-logo { width: 17px; height: 17px; margin-left: 12px; background: #000; border: 1px solid #1cb6f0; position: relative; overflow: hidden; flex: none; }
.ws-text { display: block; font: bold 7.500px/9px "Liberation Sans", sans-serif; color: #fff; padding-left: 1px; }
.ws-line { position: absolute; left: 2px; bottom: 2px; width: 6px; height: 1px; background: #fff; }
.menu { display: flex; gap: 11.700px; margin-left: 16px; letter-spacing: -.25px; }
.menu u { text-underline-offset: 2px; }
.wintitle { margin-left: 31px; color: #808284; letter-spacing: -.1px; }
.winctl { margin-left: auto; display: flex; gap: 37px; margin-right: 17px; }
.wc { width: 10px; height: 10px; }

/* nav */
.navbar { height: 29px; flex: none; display: flex; align-items: center; border-bottom: 1px solid #323232; }
.nav-folder { margin-left: 8px; color: #87939a; }
.crumb { margin-left: 4px; font-weight: 700; letter-spacing: -.15px; }
.i-user { width: 26px; height: 16px; color: #afb1b3; }
.sep-a { margin: 0 10px 0 8px; }
.runcfg { width: 100px; height: 22px; border: 1px solid #5e6060; border-radius: 3px; display: flex; align-items: center; padding: 0 9px 0 7px; justify-content: space-between; flex: none; letter-spacing: -.3px; }
.tb { width: 26px; height: 26px; display: flex; align-items: center; justify-content: center; flex: none; }
.tb.first { margin-left: 6px; }
.tb-last { margin-right: 2px; }
.sep-b { margin: 0 9px 0 4px; }
.gitlbl { width: 23px; flex: none; letter-spacing: -.3px; }
.sep-c { margin: 0 2px; }
.hover { width: 22px; height: 22px; display: flex; align-items: center; justify-content: center; background: #4c5052; border-radius: 2px; }

/* workspace */
.workspace { flex: 1; min-height: 0; display: flex; }
.left-strip { width: 22px; flex: none; display: flex; flex-direction: column; align-items: center; border-right: 1px solid #323232; padding-bottom: 14px; }
.strip-project { width: 21px; height: 74px; background: #2d2f30; display: flex; flex-direction: column; align-items: center; padding-top: 9px; flex: none; }
.vtext { writing-mode: vertical-rl; transform: rotate(180deg); font: 11px/16px "Noto Sans", sans-serif; color: #afb1b3; flex: none; }
.vtext.active { color: #d6d8da; }
.strip-ic { width: 12px; height: 12px; margin-top: 5px; }
.strip-ic.light { color: #c9cbcd; }
.s-npm { margin-top: 21px; }
.s-st { margin-top: 19px; }
.center { flex: 1; min-width: 0; display: flex; flex-direction: column; }
.top { height: 597px; flex: none; display: flex; border-bottom: 1px solid #323232; }
.right-strip { width: 21px; flex: none; display: flex; flex-direction: column; align-items: center; border-left: 1px solid #323232; padding-top: 12px; position: relative; }
.bell { width: 12px; height: 13px; }
.vtext-r { writing-mode: vertical-rl; font: 11.500px/16px "Noto Sans", sans-serif; color: #afb1b3; margin-top: 2px; }
.right-strip::before { content: ""; position: absolute; left: 14px; top: 12px; width: 5px; height: 5px; border-radius: 50%; background: #3592c4; }

/* project */
.project { width: 345px; flex: none; border-right: 1px solid #323232; display: flex; flex-direction: column; min-height: 0; }
.pj-head { height: 27px; flex: none; display: flex; align-items: center; padding-left: 13px; }
.pj-ic { width: 14px; height: 14px; }
.pj-title { margin-left: 5px; color: #a8aaac; letter-spacing: -.2px; }
.pj-tri { margin-left: 16px; width: 8px; }
.pj-a { margin-left: 10px; }
.pj-sep { margin: 0 9.500px 0 6px; }
.pj-m { margin: 0 4px 0 10px; }
.tree { position: relative; flex: 1; min-height: 0; overflow: hidden; letter-spacing: -.3px; }
.row { height: 20px; display: flex; align-items: center; white-space: nowrap; }
.row .tw { color: #9a9da0; }
.row.dir { padding-left: 21px; }
.row.file { padding-left: 42px; }
.fic { color: #87939a; margin: 0 3px 0 5px; }
.file .fic { margin-left: 0; }
.root { background: #0d293e; padding-left: 4px; }
.root .fic { margin: 0 3px 0 4px; }
.root b { font-weight: 700; letter-spacing: -.15px; }
.path { margin-left: 6px; color: #787a7c; }
.lib { background: #4d4a3f; }
.libroot { margin-left: 7px; color: #787a7c; }
.pj-scroll { position: absolute; right: 0; top: 0; width: 8px; height: 437px; background: rgba(255, 255, 255, .13); }

/* editor */
.editor { flex: 1; min-width: 0; background: #282828; padding: 306px 0 0 472px; }
.hint { margin: 0; height: 39px; line-height: 39px; font-size: 16px; color: #a6a8aa; white-space: nowrap; letter-spacing: .2px; }
.hint span { margin-left: 10px; color: #589df6; letter-spacing: .35px; }

/* bottom */
.bottom { flex: 1; min-height: 0; display: flex; flex-direction: column; border-bottom: 1px solid #323232; }
.tabs { height: 27px; flex: none; background: #3d4b5c; border-bottom: 1px solid #323232; display: flex; align-items: center; padding-left: 6px; }
.tab-lbl { width: 38px; flex: none; color: #b4b7ba; }
.tab { position: relative; flex: none; color: #b6b8ba; white-space: nowrap; letter-spacing: -.15px; }
.tab.on::after { content: ""; position: absolute; left: -12px; right: -11px; bottom: -4px; height: 3px; background: #4a88c7; }
.t-con { margin-left: 24px; }
.t-head { margin-left: 22px; }
.tab-x { margin-left: 7px; color: #6e7d8c; width: 8px; height: 8px; flex: none; }
.tab-g { width: 14px; height: 14px; }
.tab-m { margin: 0 5px 0 10.500px; }
.git-body { flex: 1; min-height: 0; display: flex; }
.vtools { width: 29px; flex: none; display: flex; flex-direction: column; align-items: center; border-right: 1px solid #323232; }
.vt-top { height: 31px; display: flex; align-items: center; justify-content: center; flex: none; }
.vt { height: 26px; display: flex; align-items: center; justify-content: center; flex: none; }
.vt .i { width: 14px; height: 14px; }
.hsep { width: 20px; height: 1px; background: #515355; margin: 3px 0; flex: none; }
.vt-top + .vt { margin-top: 4px; border-top: 0; }
.more { color: #8a8c8e; line-height: 16px; margin-bottom: 2px; }
.sub-head { height: 33px; flex: none; border-bottom: 1px solid #323232; display: flex; align-items: center; }
.branches { width: 554px; flex: none; border-right: 1px solid #323232; letter-spacing: -.3px; }
.br-s { margin-left: 11px; color: #8a8c8e; }
.br-row { height: 20px; display: flex; align-items: center; white-space: nowrap; }
.br-row .tw { color: #9a9da0; }
.lv1 { padding-left: 25px; }
.lv0 { padding-left: 3px; }
.lv0 .tw { margin-right: 6px; }
.lv2 { padding-left: 43px; }
.lv2 .bi { margin-right: 3px; }
.lv3 { padding-left: 21px; }
.lv3 .tw { margin-right: 5px; }
.lv4 { padding-left: 60px; }
.lv4 .bi { margin-right: 3px; }
.bi { margin-right: 4px; width: 16px; height: 16px; }
.orange { color: #f4af3d; }
.brc { color: #9aa3a8; }
.fold { color: #87939a; }
.log { width: 906px; flex: none; border-right: 1px solid #323232; display: flex; flex-direction: column; min-height: 0; }
.log-head { position: relative; }
.logsearch { width: 219px; height: 27px; margin-left: 3px; background: #45494a; border: 1px solid #646464; border-radius: 2px; display: flex; align-items: center; padding: 0 5px 0 6px; color: #787a7c; flex: none; }
.lq { color: #8a8c8e; }
.re { font-weight: 700; margin-right: 14px; }
.cc { font-weight: 700; }
.flt { color: #8e9092; white-space: nowrap; flex: none; letter-spacing: -.25px; }
.flt em { font-style: normal; color: #b6b8ba; }
.f-br { margin-left: 10px; }
.fx { margin: 0 12px 0 6px; color: #6a6c6e; width: 8px; height: 8px; flex: none; }
.sm-tri { width: 8px; height: 5px; }
.f-u, .f-d, .f-p { margin-right: 7px; }
.f-d { margin-left: 13px; margin-right: 6px; }
.f-p { margin-left: 12px; }
.f-sep { margin: 0 6px 0 11px; }
.lt { width: 15px; height: 15px; }
.lt1 { margin-right: 11px; }
.lt2 { margin-right: 13px; }
.lt3 { margin-right: 9px; }
.lt4 { margin-right: 7px; }
.log-list { position: relative; flex: 1; min-height: 0; overflow: hidden; }
.c { height: 24px; display: flex; align-items: center; padding-left: 48px; white-space: nowrap; }
.c.off { color: #646668; }
.s { flex: 1; position: relative; font-size: 12px; }
.s.latin { font-size: 13px; letter-spacing: -.08px; }
.d { width: 155px; flex: none; }
.reftag { position: absolute; left: 433px; top: 2px; height: 17px; width: 94px; display: flex; align-items: center; padding-left: 4px; background: #45494a; color: #9a9c9e; line-height: 16px; font-size: 13px; letter-spacing: -.45px; }
.rt { width: 17px; height: 15px; margin-right: 3px; flex: none; }
.graph { position: absolute; left: 0; top: 0; width: 50px; height: 281px; }
.log-scroll { position: absolute; right: 0; top: 1px; width: 8px; height: 18px; background: #5a5d5f; }
.details { flex: 1; min-width: 0; display: flex; flex-direction: column; letter-spacing: -.25px; }
.det-head { padding: 0 8px 0 7px; }
.d-u { margin-left: 11px; }
.d-g { margin-left: 11px; }
.d-c { margin-left: 10px; }
.det-a { height: 187px; flex: none; display: flex; align-items: center; justify-content: center; color: #6d6f71; border-bottom: 1px solid #323232; padding-bottom: 54px; }
.det-b { flex: 1; display: flex; align-items: center; justify-content: center; color: #6d6f71; padding-bottom: 23px; }

/* bottom bars */
.toolbar-bottom { height: 22px; flex: none; display: flex; padding-left: 22px; border-bottom: 1px solid #515151; font-size: 11px; }
.tw-btn { display: flex; align-items: center; padding: 0 10px 0 10px; color: #a8aaac; gap: 4px; white-space: nowrap; margin-right: 1px; }
.tw-btn.on { background: #2d2f30; color: #b6b8ba; gap: 3px; padding: 0 9px 0 6px; width: 49px; }
.tw-btn.t-todo { margin-right: 3px; }
.tw-btn .sm { width: 12px; height: 12px; }
.statusbar { height: 20px; flex: none; display: flex; align-items: center; padding-left: 5px; color: #a0a2a4; white-space: nowrap; }
.st-msg { letter-spacing: -.08px; }
.st-ic { width: 14px; height: 14px; margin-right: 7px; }
.st-br { color: #8a8c8e; margin-right: 10px; }
.taskbar { height: 8px; flex: none; display: flex; overflow: hidden; background: linear-gradient(90deg, #1f3a42, #1f3040 50%, #1d2b44); }
.tk-app { width: 47px; margin-left: 364px; background: #3f5059; flex: none; }
.tk-time { color: #e8e8e8; font-size: 12px; line-height: 14px; height: 8px; margin-right: 70px; flex: none; overflow: hidden; }
.tk-edge { width: 1px; background: #cfd4da; margin-right: 4px; flex: none; }

/* overlays */
.tooltip { position: absolute; left: 1728px; top: 71px; width: 164px; height: 32px; background: #4f5152; border: 1px solid #6d6f70; display: flex; align-items: center; padding-left: 10px; color: #b6b8ba; white-space: nowrap; letter-spacing: -.3px; }
.tooltip span { margin-left: 8px; color: #919395; }
.overlay { position: absolute; left: 0; top: 0; width: 1920px; height: 1048px; pointer-events: none; }
.watermark { position: absolute; left: 1671px; top: 1015px; font: 20px/26px "Noto Sans CJK SC", sans-serif; color: rgba(225, 227, 229, .75); white-space: nowrap; }
.widget { position: absolute; left: 1876px; top: 302px; width: 44px; height: 130px; background: #2c2e32; border-radius: 8px 0 0 8px; }
.w-top { height: 31px; display: flex; justify-content: center; align-items: center; border-bottom: 1px solid #3a3d41; }
.shield { width: 14px; height: 19px; }
.shield-n { font: bold 12px "Liberation Sans", sans-serif; fill: #fff; text-anchor: middle; }
.w-mid { height: 34px; border-bottom: 1px solid #3a3d41; padding: 6px 0 0 8px; }
.w-pct { font: bold 16px/15px "Liberation Sans", sans-serif; color: #f2f2f2; white-space: nowrap; }
.w-pct small { font: 10px "Liberation Sans", sans-serif; color: #9a9c9e; }
.w-bar { width: 28px; height: 4px; margin-top: 3px; border-radius: 2px; background: #44474b; overflow: hidden; }
.w-bar i { display: block; width: 24px; height: 4px; background: linear-gradient(90deg, #2fb7a8, #d9b13a 60%, #f09a2a); }
.w-net { padding: 6px 0 0 5px; display: flex; flex-direction: column; gap: 4px; }
.w-sp { display: flex; align-items: center; gap: 6px; }
.ar { width: 4px; height: 11px; margin-top: 2px; flex: none; }
.w-val { font: 11px/12px "Liberation Sans", sans-serif; color: #eeeeee; width: 20px; }
.w-val small { display: block; font-size: 9px; line-height: 11px; color: #8f9193; }
```
